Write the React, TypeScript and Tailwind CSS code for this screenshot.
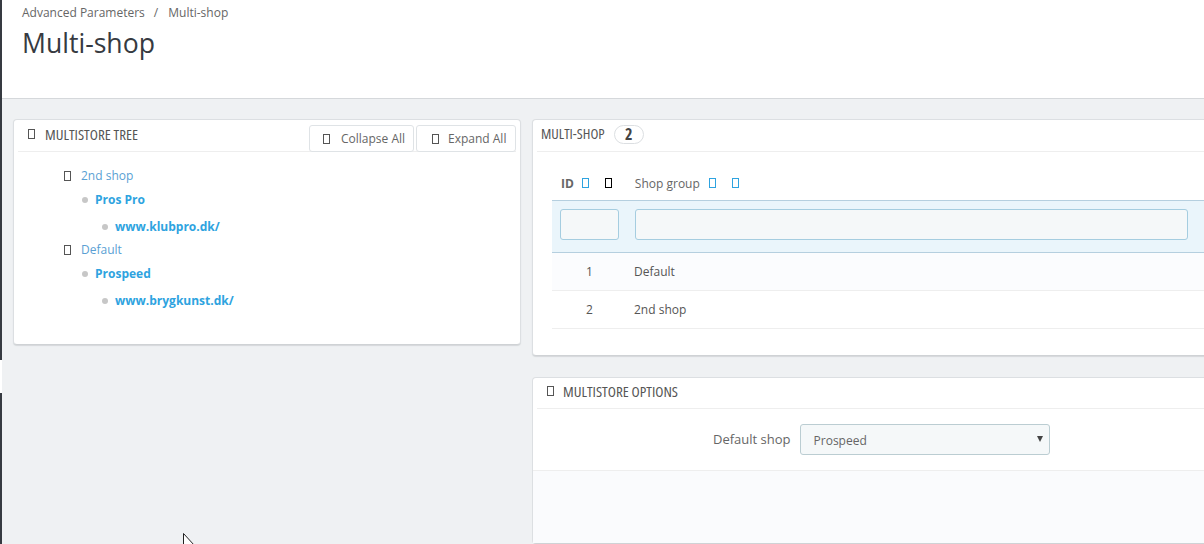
import React from 'react';

const Tofu = ({ className = 'border-[#555]' }: { className?: string }) => (
  <span className={`inline-block w-[7px] h-[10px] shrink-0 border ${className}`} />
);

const heading = "font-['Open_Sans',sans-serif] [font-stretch:75%] text-[15px] text-[#555] uppercase";

const tree = [
  { shop: '2nd shop', group: 'Pros Pro', url: 'www.klubpro.dk/' },
  { shop: 'Default', group: 'Prospeed', url: 'www.brygkunst.dk/' },
];

const Bullet = () => <span className="w-[6px] h-[6px] rounded-full bg-[#c7c7c7] shrink-0" />;

const TreeToolButton = ({ label, className }: { label: string; className: string }) => (
  <button className={`${className} h-[27px] flex items-center bg-white border border-[#dfe3e6] rounded-[3px] text-[12px] text-[#666]`}>
    <Tofu />
    {label}
  </button>
);

const App = () => {
  return (
    <div className="relative flex w-[1204px] h-[544px] overflow-hidden bg-[#eff1f3] font-['Open_Sans',sans-serif] text-[12px] text-[#555]">
      <div className="w-[2px] shrink-0 flex flex-col">
        <div className="h-[360px] bg-[#363a41]" />
        <div className="h-[33px] bg-white" />
        <div className="flex-1 bg-[#363a41]" />
      </div>

      <div className="flex-1 min-w-0 flex flex-col">
        <header className="h-[99px] shrink-0 bg-white border-b border-[#d5d8db] pl-[20px] pt-[4px]">
          <div className="flex gap-[9px] h-[18px] items-center text-[#666]">
            <span>Advanced Parameters</span>
            <span>/</span>
            <span className="ml-[1px]">Multi-shop</span>
          </div>
          <h1 className="mt-[2px] text-[26.6px] leading-[38px] text-[#363a41]">Multi-shop</h1>
        </header>

        <main className="flex gap-[11px] pl-[11px] pt-[20px]">
          <section className="w-[508px] h-[226px] shrink-0 bg-white border border-[#dcdfe2] border-b-[#cfd2d5] rounded-[4px] shadow-[0_1px_1px_#d5d8db] px-[4px]">
            <div className="h-[32px] flex justify-between border-b border-[#eeeeee]">
              <div className={`flex items-center gap-[10px] pl-[10px] pb-[3px] ${heading}`}>
                <Tofu />
                <span>Multistore tree</span>
              </div>
              <div className="flex gap-[2px] pt-[5px]">
                <TreeToolButton label="Collapse All" className="w-[105px] pl-[13px] gap-[11px]" />
                <TreeToolButton label="Expand All" className="w-[100px] pl-[15px] gap-[9px]" />
              </div>
            </div>
            <div className="pt-[14px] pl-[46px]">
              {tree.map((item) => (
                <div key={item.shop}>
                  <div className="h-[20px] flex items-center gap-[10px] text-[#5a9fd4]">
                    <Tofu />
                    <span>{item.shop}</span>
                  </div>
                  <div className="h-[28px] pl-[18px] flex items-center gap-[7px] font-bold text-[#2ea3e0]">
                    <Bullet />
                    <span>{item.group}</span>
                  </div>
                  <div className="h-[26px] pl-[38px] flex items-center gap-[7px] font-bold text-[#2ea3e0]">
                    <Bullet />
                    <span>{item.url}</span>
                  </div>
                </div>
              ))}
            </div>
          </section>

          <div className="w-[690px] shrink-0 flex flex-col gap-[21px]">
            <section className="h-[237px] bg-white border border-[#dcdfe2] border-b-[#cfd2d5] rounded-[4px] shadow-[0_1px_1px_#d5d8db] pl-[4px]">
              <div className={`h-[32px] flex items-center gap-[9px] pl-[4px] pb-[3px] border-b border-[#eeeeee] ${heading}`}>
                <span className="text-[14.5px]">Multi-shop</span>
                <span className="w-[30px] h-[19px] flex items-center justify-center rounded-full border border-[#dcdfe2] font-bold text-[#444] text-[16px]">2</span>
              </div>

              <div className="ml-[15px] mt-[17px]">
                <div className="h-[31px] flex items-center text-[12px] text-[#666] pb-[1px]">
                  <span className="ml-[9px] font-bold">ID</span>
                  <span className="ml-[8px]"><Tofu className="border-[#2ea3e0] block" /></span>
                  <span className="ml-[16px]"><Tofu className="border-black block" /></span>
                  <span className="ml-[23px]">Shop group</span>
                  <span className="ml-[9px]"><Tofu className="border-[#2ea3e0] block" /></span>
                  <span className="ml-[16px]"><Tofu className="border-[#2ea3e0] block" /></span>
                </div>
                <div className="h-[53px] flex items-start gap-[16px] pl-[8px] pt-[8px] bg-[#eaf5fb] border-y border-[#b5cfdf]">
                  <div className="w-[59px] h-[31px] rounded-[3px] border border-[#a5cde0] bg-[#f5f8f9]" />
                  <div className="w-[553px] h-[31px] rounded-[3px] border border-[#a5cde0] bg-[#f5f8f9]" />
                </div>
                <div className="h-[38px] flex items-center bg-[#fbfcfe] border-b border-[#eeeeee]">
                  <span className="w-[82px] pl-[34px]">1</span>
                  <span>Default</span>
                </div>
                <div className="h-[38px] flex items-center border-b border-[#eeeeee]">
                  <span className="w-[82px] pl-[34px]">2</span>
                  <span>2nd shop</span>
                </div>
              </div>
            </section>

            <section className="h-[167px] flex flex-col bg-white border border-[#dcdfe2] border-b-[#cfd2d5] rounded-[4px]">
              <div className="pl-[4px]">
                <div className={`h-[31px] flex items-center gap-[9px] pl-[10px] pb-[4px] border-b border-[#eeeeee] ${heading}`}>
                  <Tofu />
                  <span>Multistore options</span>
                </div>
              </div>
              <div className="h-[62px] flex items-center border-b border-[#eeeeee]">
                <label className="ml-[180px] pt-[1px] text-[13px] text-[#666]">Default shop</label>
                <div className="ml-[9px] w-[250px] h-[31px] flex items-center justify-between pl-[13px] pr-[6px] rounded-[3px] border border-[#bbcdd2] bg-[#f5f8f9] text-[#666]">
                  <span className="pt-[2px]">Prospeed</span>
                  <span className="w-0 h-0 mb-[2px] border-x-[3px] border-x-transparent border-t-[6px] border-t-[#444]" />
                </div>
              </div>
              <div className="flex-1 bg-[#fafbfd]" />
            </section>
          </div>
        </main>
      </div>

      <svg className="absolute left-[183px] top-[533px]" width="12" height="12" viewBox="0 0 12 12" fill="white" stroke="#222" strokeWidth="1">
        <path d="M0.5 0.5V17L5 12.5H11.5Z" />
      </svg>
    </div>
  );
};

export default App;
